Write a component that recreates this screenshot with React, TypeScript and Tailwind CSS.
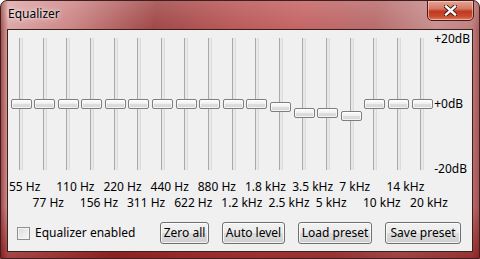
const bands = [
  { label: "55 Hz", offset: 0 },
  { label: "77 Hz", offset: 0 },
  { label: "110 Hz", offset: 0 },
  { label: "156 Hz", offset: 0 },
  { label: "220 Hz", offset: 0 },
  { label: "311 Hz", offset: 0 },
  { label: "440 Hz", offset: 0 },
  { label: "622 Hz", offset: 0 },
  { label: "880 Hz", offset: 0 },
  { label: "1.2 kHz", offset: 0 },
  { label: "1.8 kHz", offset: 0 },
  { label: "2.5 kHz", offset: 3 },
  { label: "3.5 kHz", offset: 9 },
  { label: "5 kHz", offset: 9 },
  { label: "7 kHz", offset: 12 },
  { label: "10 kHz", offset: 0 },
  { label: "14 kHz", offset: 0 },
  { label: "20 kHz", offset: 0 },
];

function Slider({ offset }: { offset: number }) {
  return (
    <div className="relative flex h-[149px] justify-center">
      <div className="mt-[8px] h-[132px] w-[4px] border-l border-r border-l-[#a9a9a9] border-r-[#dcdcdc] bg-[#e8e8e8]" />
      <div
        className="absolute left-[1px] h-[10px] w-[21px] rounded-[2px] border border-[#7e7e7e] bg-[linear-gradient(#fdfdfd,#f0f0f0_45%,#dedede_55%,#d6d6d6)] shadow-[inset_0_0_0_1px_rgba(255,255,255,0.7)]"
        style={{ top: 69 + offset }}
      />
    </div>
  );
}

function Button({ children, w }: { children: string; w: string }) {
  return (
    <button
      className={`${w} h-[22px] rounded-[3px] border border-[#707070] bg-[linear-gradient(#f2f2f2,#ebebeb_50%,#dddddd_51%,#cfcfcf)] text-center leading-[20px] shadow-[inset_0_0_0_1px_rgba(255,255,255,0.75)]`}
    >
      {children}
    </button>
  );
}

export default function App() {
  return (
    <div className="h-[259px] w-[480px] bg-white font-['Noto_Sans',sans-serif] text-[12px] text-black">
      <div className="flex h-full flex-col rounded-t-[7px] border border-[#3e1e1e] bg-[linear-gradient(180deg,rgba(255,255,255,0.15),rgba(255,255,255,0)_12%,rgba(0,0,0,0)_80%,rgba(120,0,0,0.55)),linear-gradient(90deg,rgba(110,10,10,0.55),rgba(110,10,10,0)_1.5%,rgba(110,10,10,0)_98.5%,rgba(110,10,10,0.25)),linear-gradient(100deg,#e0abab_0%,#cc8585_14%,#a04646_30%,#b95757_45%,#c46363_58%,#b76a6a_72%,#c78e8e_84%,#b46767_100%)]">
        <div className="flex h-[28px] items-start justify-between">
          <span className="ml-[7px] mt-[5px] leading-[16px] [text-shadow:0_0_6px_rgba(255,255,255,0.9),0_0_3px_rgba(255,255,255,0.8)]">
            Equalizer
          </span>
          <div className="mr-[5px] -mt-px flex h-[21px] w-[47px] items-center justify-center rounded-b-[5px] border border-[#4a1a14] bg-[linear-gradient(#e4a595,#d47a66_40%,#c2391f_55%,#c84a2e_80%,#db7c60)] shadow-[inset_0_0_0_1px_rgba(255,220,210,0.55)]">
            <svg width="13" height="11" viewBox="0 0 13 11">
              <path d="M2 1.5 L11 9.5 M11 1.5 L2 9.5" stroke="#3b1510" strokeWidth="4.2" strokeLinecap="square" />
              <path d="M2 1.5 L11 9.5 M11 1.5 L2 9.5" stroke="#ffffff" strokeWidth="2.4" strokeLinecap="square" />
            </svg>
          </div>
        </div>
        <div className="mx-[6px] flex h-[223px] flex-col border border-[#3a1f1f] bg-[#f0f0f0]">
          <div className="flex h-[149px] pl-[1.5px]">
            <div className="grid grid-cols-[repeat(18,23.6px)]">
              {bands.map((b) => (
                <Slider key={b.label} offset={b.offset} />
              ))}
            </div>
            <div className="flex h-[147px] flex-col justify-between pt-[1px] leading-[16px]">
              <span>+20dB</span>
              <span>+0dB</span>
              <span>-20dB</span>
            </div>
          </div>
          <div className="grid grid-cols-[repeat(18,23.6px)] pl-[1px] leading-[16px]">
            {bands.map((b, i) => (
              <span key={b.label} className="whitespace-nowrap" style={{ gridRow: (i % 2) + 1, gridColumn: i + 1 }}>
                {b.label}
              </span>
            ))}
          </div>
          <div className="mt-[11px] flex h-[22px] items-center">
            <div className="ml-[9px] flex items-center gap-[5px]">
              <div className="h-[13px] w-[13px] border border-[#8e8f8f] bg-[linear-gradient(135deg,#dcdcdc,#f8f8f8)] shadow-[inset_0_0_0_1px_#f4f4f4]" />
              <span>Equalizer enabled</span>
            </div>
            <div className="ml-auto mr-[11px] flex gap-[13px]">
              <Button w="w-[49px]">Zero all</Button>
              <Button w="w-[63px]">Auto level</Button>
              <Button w="w-[74px]">Load preset</Button>
              <Button w="w-[76px]">Save preset</Button>
            </div>
          </div>
        </div>
      </div>
    </div>
  );
}
